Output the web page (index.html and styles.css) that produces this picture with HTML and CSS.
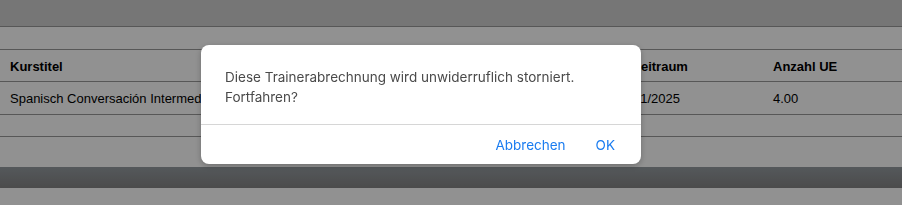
FILE: index.html
```html
<!DOCTYPE html>
<html lang="de">
<head>
    <meta charset="UTF-8">
    <meta name="viewport" content="width=device-width, initial-scale=1.0">
    <title>Trainerabrechnungen</title>
    <link rel="stylesheet" href="styles.css">
</head>
<body>
    <div class="topbar"></div>
    <div class="toolbar"></div>

    <table class="course-table">
        <thead>
            <tr>
                <th class="col-title">Kurstitel</th>
                <th class="col-period">Zeitraum</th>
                <th>Anzahl UE</th>
            </tr>
        </thead>
        <tbody>
            <tr>
                <td>Spanisch Conversación Intermedio B1</td>
                <td>01/2025</td>
                <td>4.00</td>
            </tr>
            <tr class="empty-row">
                <td></td><td></td><td></td>
            </tr>
        </tbody>
    </table>

    <div class="spacer"></div>
    <div class="footer-bar"></div>

    <!-- Bestätigungsdialog -->
    <div class="overlay">
        <div class="dialog">
            <div class="dialog-body">
                Diese Trainerabrechnung wird unwiderruflich storniert. Fortfahren?
            </div>
            <div class="dialog-actions">
                <button class="dialog-btn">Abbrechen</button>
                <button class="dialog-btn">OK</button>
            </div>
        </div>
    </div>
</body>
</html>
```

FILE: styles.css
```css
body, html {
    margin: 0;
    padding: 0;
    height: 100%;
    background-color: #ffffff;
    font-family: 'Liberation Sans', Arial, sans-serif;
    overflow: hidden;
}

.topbar {
    height: 26px;
    background-color: #cfcfcf;
    border-bottom: 1px solid #9a9a9a;
}

.toolbar {
    height: 22px;
}

.course-table {
    width: 100%;
    border-collapse: collapse;
    font-size: 13px;
    color: #000;
}

.course-table th,
.course-table td {
    text-align: left;
    padding: 0 10px;
    border-top: 1px solid #9a9a9a;
}

.course-table th {
    height: 29px;
    padding-top: 2px;
    font-weight: bold;
}

.course-table td {
    height: 32px;
}

.course-table .empty-row td {
    height: 21px;
    border-bottom: 1px solid #9a9a9a;
}

.col-title {
    width: 603px; /* Spalte Kurstitel */
}

.col-period {
    width: 120px;
}

.spacer {
    height: 30px;
}

.footer-bar {
    height: 21px;
    background: linear-gradient(#959ca1, #858585);
}

/* Modal */
.overlay {
    position: fixed;
    inset: 0;
    background-color: rgba(0, 0, 0, 0.43);
    padding: 45px 0 0 201px;
}

.dialog {
    width: 440px;
    background-color: #fff;
    border-radius: 8px;
    box-shadow: 0 2px 6px rgba(0, 0, 0, 0.25);
    font-family: Inter, 'Noto Sans', sans-serif;
}

.dialog-body {
    padding: 22px 40px 17px 24px;
    font-size: 13.5px;
    line-height: 20px;
    color: #4a4a4a;
    border-bottom: 1px solid #d6d6d6;
}

.dialog-actions {
    display: flex;
    justify-content: flex-end;
    gap: 30px;
    padding: 11px 26px 9px 0;
}

.dialog-btn {
    background: none;
    border: none;
    padding: 0;
    font-family: inherit;
    font-size: 13.5px;
    line-height: 19px;
    color: #1a7cf0;
    cursor: pointer;
}
```
